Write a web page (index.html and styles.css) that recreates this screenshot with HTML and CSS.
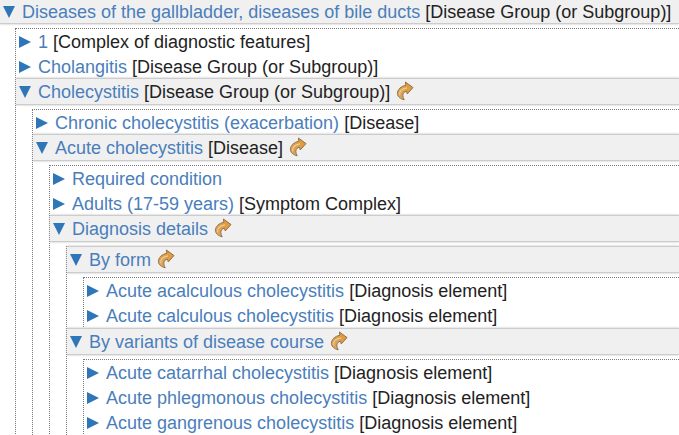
FILE: index.html
```html
<!DOCTYPE html>
<html lang="en">
<head>
    <meta charset="utf-8">
    <title>Diseases of the gallbladder, diseases of bile ducts</title>
    <link rel="stylesheet" href="styles.css">
</head>
<body>
    <!-- shared "go to" arrow -->
    <svg class="sprite" aria-hidden="true">
        <defs>
            <linearGradient id="gold" x1="0" y1="1" x2="1" y2="0">
                <stop offset="0" stop-color="#d9a868"/>
                <stop offset="0.5" stop-color="#dda050"/>
                <stop offset="1" stop-color="#e0982c"/>
            </linearGradient>
        </defs>
        <symbol id="goto" viewBox="0 0 18 20">
            <path d="M9.4 1 L17 6.6 L11.2 13 L10.6 10.2 C8.2 10.6 6.8 12.2 6.8 14.2 C6.8 16 7.4 17.4 8.2 18.8 C4.6 18 1.6 15.8 1.4 12.6 C1.4 8.6 5 5 9.8 4.4 Z" fill="url(#gold)" stroke="#94704a" stroke-width="1" stroke-linejoin="round"/>
            <path d="M3.6 14.2 C3.2 10.4 6.2 7.6 11 6.8" fill="none" stroke="#efcb8c" stroke-width="1.2"/>
        </symbol>
    </svg>

    <details class="node root" open>
        <summary class="row"><a href="#">Diseases of the gallbladder, diseases of bile ducts</a> [Disease Group (or Subgroup)]</summary>
        <div class="group">
            <details class="node">
                <summary class="row"><a href="#">1</a> [Complex of diagnostic features]</summary>
            </details>
            <details class="node">
                <summary class="row"><a href="#">Cholangitis</a> [Disease Group (or Subgroup)]</summary>
            </details>
            <details class="node" open>
                <summary class="row"><a href="#">Cholecystitis</a> [Disease Group (or Subgroup)]<svg class="goto"><use href="#goto"/></svg></summary>
                <div class="group">
                    <details class="node">
                        <summary class="row"><a href="#">Chronic cholecystitis (exacerbation)</a> [Disease]</summary>
                    </details>
                    <details class="node" open>
                        <summary class="row"><a href="#">Acute cholecystitis</a> [Disease]<svg class="goto"><use href="#goto"/></svg></summary>
                        <div class="group">
                            <details class="node">
                                <summary class="row"><a href="#">Required condition</a></summary>
                            </details>
                            <details class="node">
                                <summary class="row"><a href="#">Adults (17-59 years)</a> [Symptom Complex]</summary>
                            </details>
                            <details class="node" open>
                                <summary class="row"><a href="#">Diagnosis details</a><svg class="goto"><use href="#goto"/></svg></summary>
                                <div class="group">
                                    <details class="node" open>
                                        <summary class="row"><a href="#">By form</a><svg class="goto"><use href="#goto"/></svg></summary>
                                        <div class="group">
                                            <details class="node">
                                                <summary class="row"><a href="#">Acute acalculous cholecystitis</a> [Diagnosis element]</summary>
                                            </details>
                                            <details class="node">
                                                <summary class="row"><a href="#">Acute calculous cholecystitis</a> [Diagnosis element]</summary>
                                            </details>
                                        </div>
                                    </details>
                                    <details class="node" open>
                                        <summary class="row"><a href="#">By variants of disease course</a><svg class="goto"><use href="#goto"/></svg></summary>
                                        <div class="group">
                                            <details class="node">
                                                <summary class="row"><a href="#">Acute catarrhal cholecystitis</a> [Diagnosis element]</summary>
                                            </details>
                                            <details class="node">
                                                <summary class="row"><a href="#">Acute phlegmonous cholecystitis</a> [Diagnosis element]</summary>
                                            </details>
                                            <details class="node">
                                                <summary class="row"><a href="#">Acute gangrenous cholecystitis</a> [Diagnosis element]</summary>
                                            </details>
                                        </div>
                                    </details>
                                </div>
                            </details>
                        </div>
                    </details>
                </div>
            </details>
        </div>
    </details>
</body>
</html>
```

FILE: styles.css
```css
body {
    margin: 0;
    background-color: #fff;
    color: #222;
    font-family: "Liberation Sans", Arial, sans-serif;
    font-size: 18px;
    overflow: hidden;
}

.sprite {
    position: absolute;
    width: 0;
    height: 0;
}

.row {
    display: block;
    height: 25px;
    padding-left: 3px;
    line-height: 26px;
    white-space: nowrap;
    list-style: none;
    cursor: pointer;
}

.row::before {
    content: "";
    display: inline-block;
    width: 12px;
    height: 12px;
    margin-right: 7px;
    background-color: #2f76b8;
    clip-path: polygon(0 0, 100% 50%, 0 100%);
}

.row a {
    color: #4a7ebb;
    text-decoration: none;
}

.row a:hover {
    text-decoration: underline;
}

/* opened nodes get a raised bar */
.node[open] > .row {
    box-sizing: border-box;
    height: 27px;
    margin-top: -1px;
    border-top: 1px solid #ccc;
    border-bottom: 1px solid #ccc;
    background-color: #f0f0f0;
    box-shadow: 0 0 2px #bbb;
}

.node[open] > .row::before {
    clip-path: polygon(0 0, 100% 0, 50% 100%);
}

.root[open] > .row {
    height: 25px;
    line-height: 25px;
}

.group {
    margin: 4px 0 0 16px;
    border: 1px dotted #777;
    border-right: none;
}

.root > .group {
    margin-left: 15px;
}

.goto {
    width: 18px;
    height: 20px;
    margin-left: 6px;
    vertical-align: -3px;
}
```
